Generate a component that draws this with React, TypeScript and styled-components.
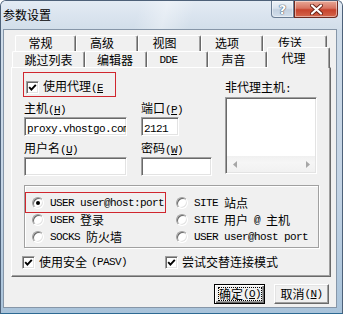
import React, { ReactElement, ReactNode } from 'react';
import styled, { createGlobalStyle, css } from 'styled-components';

const GlobalStyle = createGlobalStyle`
  html, body {
    margin: 0;
    padding: 0;
    background: #fff;
  }

  body {
    font-family: "Noto Sans CJK SC", "Noto Sans", sans-serif;
    font-size: 12px;
    color: #000;
  }

  * {
    box-sizing: border-box;
  }
`;

// ---- text helpers: ASCII runs in a narrow mono face, '&X' underlines X ----

const Latin = styled.span`
  font-family: "Liberation Mono", "DejaVu Sans Mono", monospace;
  font-size: 11px;
  letter-spacing: -0.6px;

  u {
    text-underline-offset: 1px;
  }
`;

function hotkey (p: string): ReactNode {
  const idx = p.indexOf('&');

  if (idx < 0) {
    return p;
  }

  return <>{p.slice(0, idx)}<u>{p[idx + 1]}</u>{p.slice(idx + 2)}</>;
}

function Txt ({ s }: { s: string }): ReactElement {
  const parts = s.match(/[\x00-\x7f]+|[^\x00-\x7f]+/g) || [];

  return (
    <>
      {parts.map((p, i) => /^[\x00-\x7f]/.test(p)
        ? <Latin key={i}>{hotkey(p)}</Latin>
        : <span key={i}>{p}</span>)}
    </>
  );
}

// red annotation rectangle drawn over a control
const markable = css<{ $mark?: string }>`
  ${(p) => p.$mark && css`
    position: relative;

    &::after {
      content: '';
      position: absolute;
      inset: ${p.$mark};
      border: 1px solid #d0262e;
      pointer-events: none;
    }
  `}
`;

// ---- window frame ----

const Window = styled.div`
  width: 343px;
  height: 314px;
  display: flex;
  flex-direction: column;
  border: 1px solid #4d6179;
  border-bottom-color: #2d6a93;
  border-radius: 6px 6px 0 0;
  background: linear-gradient(180deg, #dde7f1 0px, #cfdce9 28px, #c4d4e5 60%, #a9c3da 100%);
  overflow: hidden;
`;

const TitleBar = styled.div`
  height: 28px;
  flex: none;
  display: flex;
  align-items: flex-start;
  justify-content: space-between;
  padding-left: 2px;
  background:
    linear-gradient(105deg, transparent 40%, rgba(255, 255, 255, 0.35) 48%, transparent 56%),
    linear-gradient(180deg, #e3ebf4 0%, #d2deea 100%);
`;

const Title = styled.div`
  padding-top: 7px;
  line-height: 14px;
  color: #000;
`;

const CaptionButtons = styled.div`
  display: flex;
  margin-right: 4px;
`;

const CaptionButton = styled.div<{ $close?: boolean }>`
  height: 17px;
  width: ${(p) => p.$close ? 44 : 23}px;
  display: flex;
  align-items: center;
  justify-content: center;
  border: 1px solid ${(p) => p.$close ? '#6e2a20' : '#6a7d93'};
  border-top: none;
  border-radius: ${(p) => p.$close ? '0 0 4px 0' : '0 0 0 4px'};
  background: ${(p) => p.$close
    ? 'linear-gradient(180deg, #e8a896 0%, #d77461 45%, #c7432c 55%, #d4664c 100%)'
    : 'linear-gradient(180deg, #eef3f8 0%, #d9e3ee 45%, #c3d1e0 55%, #d3dfeb 100%)'};
  box-shadow: inset 0 0 0 1px rgba(255, 255, 255, 0.45);
  font-family: "DejaVu Sans", sans-serif;
  font-weight: bold;
  font-size: 13px;
  line-height: 13px;
  color: #fff;
  text-shadow: 0 0 1px #4d5d70, 0 0 1px #4d5d70, 0 0 1px #4d5d70;
`;

const Body = styled.div`
  flex: 1;
  display: flex;
  padding: 0 5px 5px 2px;
`;

const Client = styled.div`
  flex: 1;
  display: flex;
  flex-direction: column;
  background: #f0f0f0;
  border: 1px solid #8696a8;
`;

// ---- tab control ----

const TabStrip = styled.div`
  display: flex;
  flex-direction: column;
  width: 320px;
  margin: 5px 0 0 7px;
`;

const TabRow = styled.div<{ $indent: number; $front?: boolean }>`
  display: flex;
  align-items: flex-end;
  padding-left: ${(p) => p.$indent}px;
  height: ${(p) => p.$front ? 20 : 16}px;
  margin-top: ${(p) => p.$front ? -4 : 0}px;
  position: relative;
`;

const Tab = styled.div<{ $w: number; $shift?: number; $active?: boolean; $back?: boolean }>`
  width: ${(p) => p.$w}px;
  height: 16px;
  flex: none;
  display: flex;
  align-items: center;
  justify-content: center;
  padding-right: ${(p) => p.$shift ?? 0}px;
  padding-bottom: ${(p) => p.$back ? 2 : 0}px;
  background: #f0f0f0;
  border-top: 1px solid #fff;
  border-left: 1px solid #fff;
  border-right: 1px solid #696969;
  border-radius: 2px 2px 0 0;
  box-shadow: inset -1px 0 0 #a0a0a0;
  line-height: 14px;
  white-space: nowrap;

  ${(p) => p.$active && css`
    position: relative;
    z-index: 1;
    height: 21px;
    margin-bottom: -1px;
    align-items: flex-start;
    padding-top: 3px;
  `}
`;

const Panel = styled.div`
  height: 210px;
  display: flex;
  flex-direction: column;
  padding: 12px 11px 0 12px;
  background: #f0f0f0;
  border: 1px solid;
  border-color: #fff #696969 #696969 #fff;
  box-shadow: inset -1px -1px 0 #a0a0a0;
`;

// ---- controls ----

const TopSection = styled.div`
  display: flex;
  align-items: flex-start;
  gap: 13px;
`;

const LeftColumn = styled.div`
  width: 188px;
  display: flex;
  flex-direction: column;
  align-items: flex-start;
`;

const RightColumn = styled.div`
  width: 92px;
  display: flex;
  flex-direction: column;
`;

const CheckItem = styled.div<{ $mark?: string; $ml?: number }>`
  display: flex;
  align-items: center;
  gap: 4px;
  height: 14px;
  line-height: 14px;
  white-space: nowrap;
  margin-left: ${(p) => p.$ml ?? 0}px;
  justify-self: start;
  ${markable}
`;

const ClipText = styled.span<{ $w: number }>`
  display: block;
  width: ${(p) => p.$w}px;
  overflow: hidden;
`;

const sunken = css`
  background: #fff;
  border: 1px solid;
  border-color: #a0a0a0 #fff #fff #a0a0a0;
  box-shadow: inset 1px 1px 0 #696969, inset -1px -1px 0 #e3e3e3;
`;

const CheckBox = styled.span`
  ${sunken}
  width: 13px;
  height: 13px;
  flex: none;
  display: flex;
  align-items: center;
  justify-content: center;
`;

const FieldGrid = styled.div`
  display: grid;
  grid-template-columns: 103px 71px;
  column-gap: 14px;
  row-gap: 5px;
  margin-top: 7px;
`;

const Field = styled.div`
  display: flex;
  flex-direction: column;
  gap: 2px;
`;

const FieldLabel = styled.div`
  height: 14px;
  line-height: 14px;
  white-space: nowrap;
`;

const TextBox = styled.div<{ $w?: number }>`
  ${sunken}
  width: ${(p) => p.$w ? `${p.$w}px` : '100%'};
  height: 19px;
  padding: 0 2px;
  line-height: 17px;
  overflow: hidden;
  white-space: nowrap;
`;

const ListBox = styled.div`
  ${sunken}
  height: 77px;
  margin-top: 3px;
  padding: 1px;
  display: flex;
  flex-direction: column;
  justify-content: flex-end;
`;

const HScroll = styled.div`
  height: 16px;
  display: flex;
  align-items: center;
  justify-content: space-between;
  padding: 0 5px 0 6px;
  background: linear-gradient(180deg, #f0f0f0 0%, #f6f6f6 40%, #f1f1f1 100%);
`;

const Group = styled.div`
  width: 295px;
  margin-top: 9px;
  padding: 8px 0 2px 7px;
  border: 1px solid #a0a0a0;
  box-shadow: inset 1px 1px 0 #fff, 1px 1px 0 #fff;
  display: grid;
  grid-template-columns: 144px 1fr;
  grid-template-rows: repeat(3, 17px);
  grid-auto-flow: column;
`;

const RadioItem = styled.div<{ $mark?: string }>`
  display: flex;
  align-items: center;
  gap: 6px;
  justify-self: start;
  height: 17px;
  line-height: 14px;
  white-space: nowrap;
  ${markable}
`;

const RadioDot = styled.span<{ $on?: boolean }>`
  ${sunken}
  width: 12px;
  height: 12px;
  flex: none;
  border-radius: 50%;
  display: flex;
  align-items: center;
  justify-content: center;

  &::after {
    content: '';
    width: 4px;
    height: 4px;
    border-radius: 50%;
    background: ${(p) => p.$on ? '#000' : 'transparent'};
  }
`;

const CheckRow = styled.div`
  display: grid;
  grid-template-columns: 143px 1fr;
  margin: 7px 0 0 -2px;
`;

const ButtonRow = styled.div`
  display: flex;
  justify-content: flex-end;
  gap: 9px;
  margin-top: 7px;
  padding-right: 7px;
`;

const Button = styled.div<{ $w: number; $default?: boolean }>`
  width: ${(p) => p.$w}px;
  height: 20px;
  display: flex;
  align-items: center;
  justify-content: center;
  background: #f0f0f0;
  line-height: 14px;
  white-space: nowrap;
  border: 1px solid;
  border-color: #fff #696969 #696969 #fff;
  box-shadow: inset -1px -1px 0 #a0a0a0, inset 1px 1px 0 #e3e3e3;

  ${(p) => p.$default && css`
    border-color: #000;
    box-shadow: inset 1px 1px 0 #fff, inset -1px -1px 0 #696969, inset -2px -2px 0 #a0a0a0;
  `}
`;

const FocusRect = styled.span`
  flex: 1;
  align-self: stretch;
  margin: 2px 2px 2px 3px;
  display: flex;
  align-items: center;
  justify-content: center;
  outline: 1px dotted #000;
  outline-offset: -1px;
`;

// ---- small drawings ----

function Check ({ on }: { on?: boolean }): ReactElement {
  return (
    <CheckBox>
      {on && (
        <svg height='9' viewBox='0 0 9 9' width='9'>
          <path d='M1.2 4.2 L3.4 6.6 L7.8 1.8' fill='none' stroke='#000' strokeWidth='1.9' />
        </svg>
      )}
    </CheckBox>
  );
}

function Arrow ({ dir }: { dir: 'left' | 'right' }): ReactElement {
  return (
    <svg height='7' viewBox='0 0 4 7' width='4'>
      <path d={dir === 'left' ? 'M4 0 L0 3.5 L4 7 Z' : 'M0 0 L4 3.5 L0 7 Z'} fill='#a7a7a7' />
    </svg>
  );
}

// ---- data ----

const backTabs = [
  { label: '常规', w: 61, shift: 10 },
  { label: '高级', w: 62, shift: 10 },
  { label: '视图', w: 63, shift: 10 },
  { label: '选项', w: 62, shift: 10 },
  { label: '传送', w: 64, shift: 10 }
];

const frontTabs = [
  { label: '跳过列表', w: 73, shift: 0 },
  { label: '编辑器', w: 62, shift: 2 },
  { label: 'DDE', w: 61, shift: 18 },
  { label: '声音', w: 59, shift: 8 },
  { label: '代理', w: 63, shift: 10, active: true }
];

const radios = [
  { label: 'USER user@host:port', on: true, mark: '-2px -2px -2px -7px' },
  { label: 'USER 登录' },
  { label: 'SOCKS 防火墙' },
  { label: 'SITE 站点' },
  { label: 'SITE 用户@主机' },
  { label: 'USER user@host port' }
];

function App (): ReactElement {
  return (
    <>
      <GlobalStyle />
      <Window>
        <TitleBar>
          <Title>参数设置</Title>
          <CaptionButtons>
            <CaptionButton>?</CaptionButton>
            <CaptionButton $close>
              <svg height='11' viewBox='0 0 13 11' width='13'>
                <path d='M2 1.5 L11 9.5 M11 1.5 L2 9.5' stroke='#6b2418' strokeLinecap='round' strokeWidth='4' />
                <path d='M2 1.5 L11 9.5 M11 1.5 L2 9.5' stroke='#fff' strokeLinecap='round' strokeWidth='2.2' />
              </svg>
            </CaptionButton>
          </CaptionButtons>
        </TitleBar>
        <Body>
          <Client>
            <TabStrip>
              <TabRow $indent={4}>
                {backTabs.map((t) => (
                  <Tab
                    $back
                    $shift={t.shift}
                    $w={t.w}
                    key={t.label}
                  ><Txt s={t.label} /></Tab>
                ))}
              </TabRow>
              <TabRow
                $front
                $indent={1}
              >
                {frontTabs.map((t) => (
                  <Tab
                    $active={t.active}
                    $shift={t.shift}
                    $w={t.w}
                    key={t.label}
                  ><Txt s={t.label} /></Tab>
                ))}
              </TabRow>
              <Panel>
                <TopSection>
                  <LeftColumn>
                    <CheckItem
                      $mark='-8px -13px -3px -3px'
                      $ml={2}
                    >
                      <Check on />
                      <ClipText $w={60}><Txt s='使用代理(&E)' /></ClipText>
                    </CheckItem>
                    <FieldGrid>
                      <Field>
                        <FieldLabel><Txt s='主机(&H)' /></FieldLabel>
                        <TextBox><Latin>proxy.vhostgo.com</Latin></TextBox>
                      </Field>
                      <Field>
                        <FieldLabel><Txt s='端口(&P)' /></FieldLabel>
                        <TextBox $w={38}><Latin>2121</Latin></TextBox>
                      </Field>
                      <Field>
                        <FieldLabel><Txt s='用户名(&U)' /></FieldLabel>
                        <TextBox />
                      </Field>
                      <Field>
                        <FieldLabel><Txt s='密码(&W)' /></FieldLabel>
                        <TextBox />
                      </Field>
                    </FieldGrid>
                  </LeftColumn>
                  <RightColumn>
                    <FieldLabel><Txt s='非代理主机:' /></FieldLabel>
                    <ListBox>
                      <HScroll>
                        <Arrow dir='left' />
                        <Arrow dir='right' />
                      </HScroll>
                    </ListBox>
                  </RightColumn>
                </TopSection>
                <Group>
                  {radios.map((r) => (
                    <RadioItem
                      $mark={r.mark}
                      key={r.label}
                    >
                      <RadioDot $on={r.on} />
                      <Txt s={r.label} />
                    </RadioItem>
                  ))}
                </Group>
                <CheckRow>
                  <CheckItem>
                    <Check on />
                    <Txt s='使用安全(PASV)' />
                  </CheckItem>
                  <CheckItem>
                    <Check on />
                    <Txt s='尝试交替连接模式' />
                  </CheckItem>
                </CheckRow>
              </Panel>
            </TabStrip>
            <ButtonRow>
              <Button
                $default
                $w={51}
              >
                <FocusRect><Txt s='确定(&O)' /></FocusRect>
              </Button>
              <Button $w={55}><Txt s='取消(&N)' /></Button>
            </ButtonRow>
          </Client>
        </Body>
      </Window>
    </>
  );
}

export default App;
